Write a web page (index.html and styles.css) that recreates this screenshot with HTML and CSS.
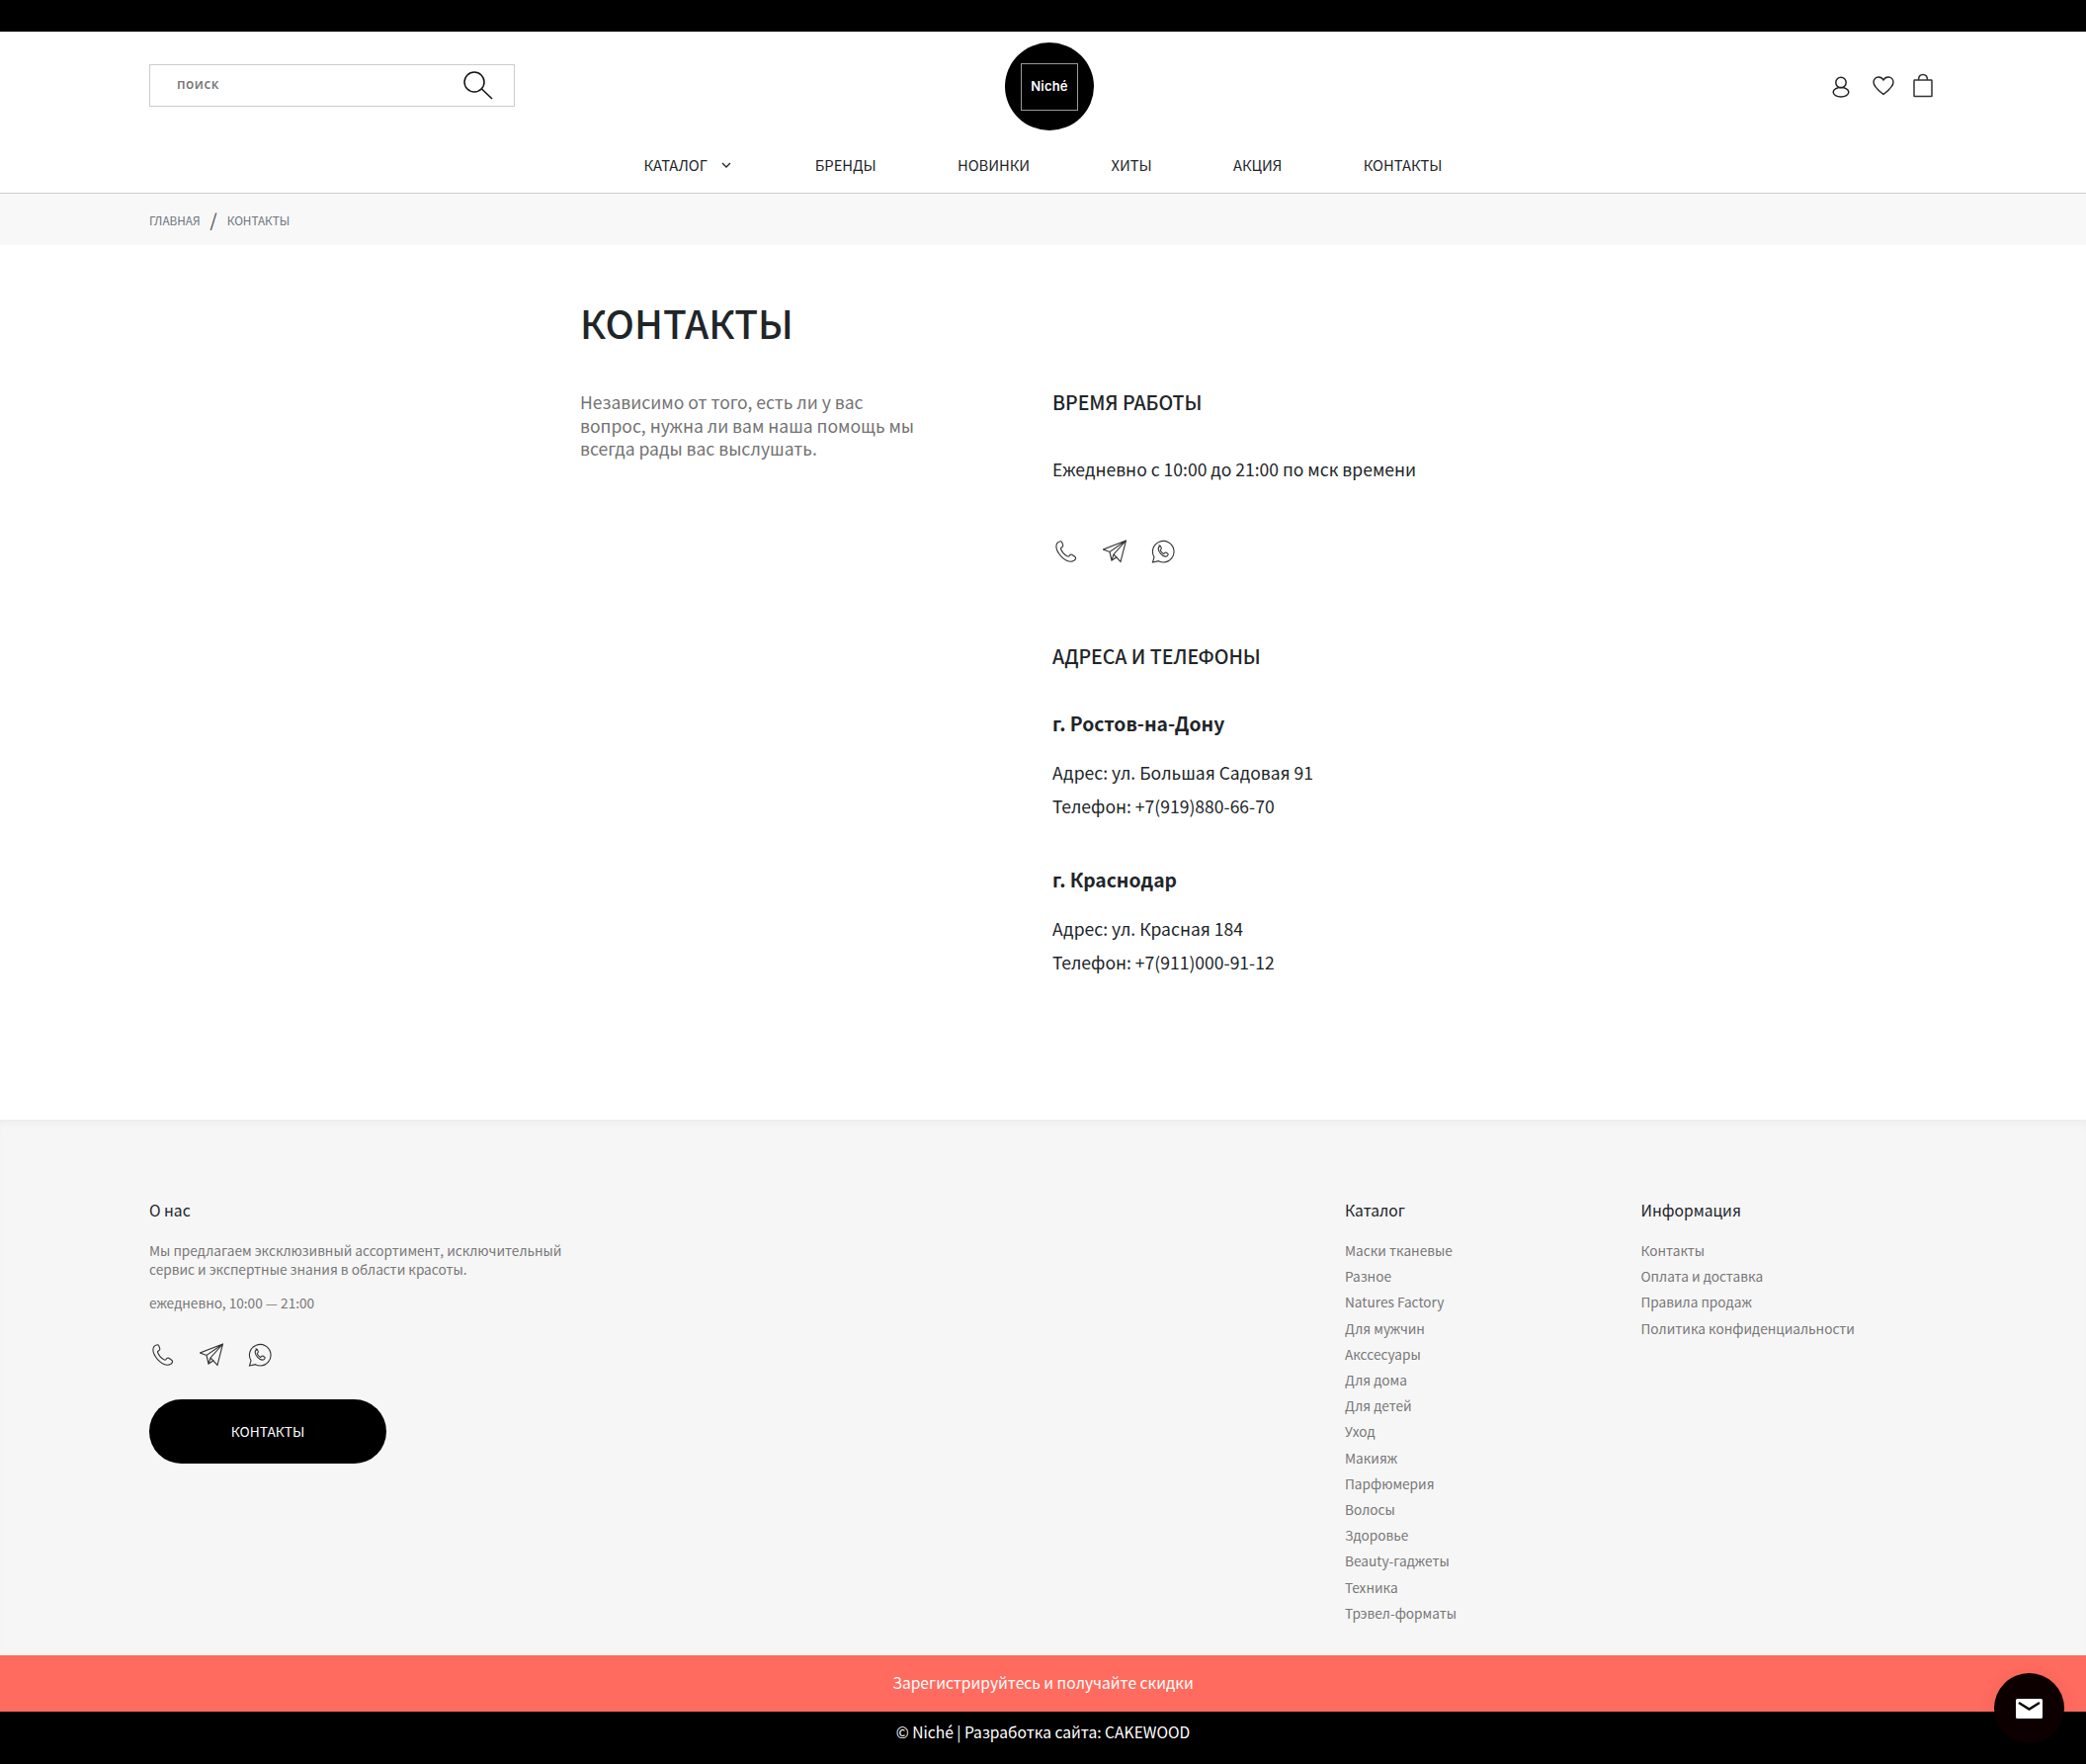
FILE: index.html
```html
<!DOCTYPE html>
<html lang="ru">
<head>
  <meta charset="UTF-8">
  <title>Контакты — Niché</title>
  <link rel="stylesheet" href="styles.css">
</head>
<body>
  <svg class="sprite" width="0" height="0">
    <symbol id="i-phone" viewBox="0 0 24 24">
      <path d="M6.2 1.800C4 2.300 2 4 1.900 6.600c-.1 3.200 1.900 7 4.600 10 2.800 3 6.300 5.400 9.600 5.600 2.300.1 4.600-.8 5.400-2.800.3-.8.1-1.400-.5-1.900l-3.200-2.200c-.7-.4-1.300-.3-1.800.2l-1.300 1.400c-.4.4-.8.4-1.300.2-1.500-.7-3-1.900-4.200-3.300-1.200-1.400-2.100-2.900-2.600-4.300-.2-.5-.1-.9.3-1.200l1.400-1.100c.6-.5.7-1.100.4-1.800L7.700 2.700c-.4-.7-.9-1-1.500-.9z"/>
    </symbol>
    <symbol id="i-plane" viewBox="0 0 24 24">
      <path d="M23.500 1 .5 10l6.500 2.500L23.500 1 11 15l7 7.500L23.500 1zM7 12.500l2 8.500 5.500-3.500M9 21l2-6"/>
    </symbol>
    <symbol id="i-whatsapp" viewBox="0 0 24 24">
      <path d="M1.500 23l1.500-5.200A10.800 10.800 0 1 1 12.500 23c-1.800 0-3.500-.4-5-1.300L1.500 23z"/>
      <path d="M9.200 6.800c-1.400.4-2.200 1.500-2 3 .3 2.700 3.900 6.900 7 7.300 1.400.2 2.600-.6 3-1.900.1-.5 0-.8-.4-1l-2-1.100c-.4-.2-.7-.1-1 .2l-.7.800c-.2.200-.5.300-.8.100-1.300-.7-2.400-1.900-3-3.200-.1-.3-.1-.5.100-.7l.7-.7c.3-.3.300-.6.200-1l-.9-2c-.3-.5-.6-.7-1.200-.6z"/>
    </symbol>
  </svg>

  <div class="topbar"></div>

  <header class="header">
    <div class="header-top">
      <form class="search">
        <span class="search-text">поиск</span>
        <svg class="search-icon" viewBox="0 0 30 30" fill="none" stroke="#111" stroke-width="1.500">
          <circle cx="11" cy="11" r="10"/>
          <path d="M18.500 18l10.500 10"/>
        </svg>
      </form>

      <a class="logo" href="#"><span class="logo-box">Niché</span></a>

      <div class="header-icons">
        <svg class="icon-user" viewBox="0 0 18 22" fill="none" stroke="#222" stroke-width="1.500">
          <circle cx="9" cy="6.500" r="5.200"/>
          <ellipse cx="9" cy="16.300" rx="7.800" ry="4.700"/>
        </svg>
        <svg class="icon-heart" viewBox="0 0 22 20" fill="none" stroke="#222" stroke-width="1.400">
          <path d="M11 18.500C6.500 14.800 1 10.800 1 6.200 1 3.200 3.200 1 6 1c2.100 0 3.900 1 5 3 1.100-2 2.900-3 5-3 2.800 0 5 2.200 5 5.200 0 4.600-5.500 8.600-10 12.300z"/>
        </svg>
        <svg class="icon-bag" viewBox="0 0 20 24" fill="none" stroke="#333" stroke-width="1.500">
          <rect x="1" y="6.500" width="18" height="16.500" rx=".5"/>
          <path d="M5.500 6.500C5.500 3 7.300 1 10 1s4.500 2 4.500 5.500"/>
        </svg>
      </div>
    </div>

    <nav class="nav">
      <a href="#" class="nav-catalog">КАТАЛОГ
        <svg class="chevron" viewBox="0 0 10 6" fill="none" stroke="#222" stroke-width="1.300"><path d="M1 1l4 4 4-4"/></svg>
      </a>
      <a href="#">БРЕНДЫ</a>
      <a href="#">НОВИНКИ</a>
      <a href="#">ХИТЫ</a>
      <a href="#">АКЦИЯ</a>
      <a href="#">КОНТАКТЫ</a>
    </nav>
  </header>

  <div class="breadcrumbs">
    <a href="#">ГЛАВНАЯ</a>
    <span class="slash">/</span>
    <a href="#">КОНТАКТЫ</a>
  </div>

  <main class="page">
    <h1 class="page-title">КОНТАКТЫ</h1>
    <div class="page-cols">
      <p class="intro">Независимо от того, есть ли у вас вопрос, нужна ли вам наша помощь мы всегда рады вас выслушать.</p>

      <div class="details">
        <h2 class="section-title">ВРЕМЯ РАБОТЫ</h2>
        <p class="hours">Ежедневно с 10:00 до 21:00 по мск времени</p>
        <div class="socials socials-main">
          <svg><use href="#i-phone"/></svg>
          <svg><use href="#i-plane"/></svg>
          <svg><use href="#i-whatsapp"/></svg>
        </div>

        <h2 class="section-title">АДРЕСА И ТЕЛЕФОНЫ</h2>

        <div class="city">
          <h3 class="city-name">г. Ростов-на-Дону</h3>
          <p>Адрес: ул. Большая Садовая 91</p>
          <p>Телефон: <a href="#">+7(919)880-66-70</a></p>
        </div>
        <div class="city">
          <h3 class="city-name">г. Краснодар</h3>
          <p>Адрес: ул. Красная 184</p>
          <p>Телефон: <a href="#">+7(911)000-91-12</a></p>
        </div>
      </div>
    </div>
  </main>

  <footer class="footer">
    <div class="footer-about">
      <h4 class="footer-title">О нас</h4>
      <p class="footer-text">Мы предлагаем эксклюзивный ассортимент, исключительный сервис и экспертные знания в области красоты.</p>
      <p class="footer-hours">ежедневно, 10:00 — 21:00</p>
      <div class="socials socials-footer">
        <svg><use href="#i-phone"/></svg>
        <svg><use href="#i-plane"/></svg>
        <svg><use href="#i-whatsapp"/></svg>
      </div>
      <a class="footer-btn" href="#">КОНТАКТЫ</a>
    </div>

    <div class="footer-catalog">
      <h4 class="footer-title">Каталог</h4>
      <ul class="footer-links">
        <li>Маски тканевые</li>
        <li>Разное</li>
        <li>Natures Factory</li>
        <li>Для мужчин</li>
        <li>Акссесуары</li>
        <li>Для дома</li>
        <li>Для детей</li>
        <li>Уход</li>
        <li>Макияж</li>
        <li>Парфюмерия</li>
        <li>Волосы</li>
        <li>Здоровье</li>
        <li>Beauty-гаджеты</li>
        <li>Техника</li>
        <li>Трэвел-форматы</li>
      </ul>
    </div>

    <div class="footer-info">
      <h4 class="footer-title">Информация</h4>
      <ul class="footer-links">
        <li>Контакты</li>
        <li>Оплата и доставка</li>
        <li>Правила продаж</li>
        <li>Политика конфиденциальности</li>
      </ul>
    </div>
  </footer>

  <div class="promo">Зарегистрируйтесь и получайте скидки</div>
  <div class="copyright">© Niché | Разработка сайта: CAKEWOOD</div>

  <a class="chat" href="#">
    <svg viewBox="0 0 27 20"><path fill="#fff" d="M1.500 0h24A1.500 1.500 0 0 1 27 1.500v17a1.500 1.500 0 0 1-1.500 1.500h-24A1.500 1.500 0 0 1 0 18.500v-17A1.500 1.500 0 0 1 1.500 0z"/><path fill="none" stroke="#0d0000" stroke-width="2.400" d="M3 4l10.500 6.500L24 4"/></svg>
  </a>
</body>
</html>
```

FILE: styles.css
```css
* {
  box-sizing: border-box;
}
body {
  margin: 0;
  position: relative;
  font-family: "Noto Sans CJK KR", "Noto Sans", sans-serif;
  background: #fff;
  color: #212529;
}
a {
  color: inherit;
  text-decoration: none;
}
h1, h2, h3, h4, p, ul {
  margin: 0;
  padding: 0;
}
ul {
  list-style: none;
}
.sprite {
  position: absolute;
}
.topbar {
  height: 32px;
  background: #000;
}

/* header */
.header {
  height: 164px;
  border-bottom: 1px solid #ccc;
}
.header-top {
  display: grid;
  grid-template-columns: 866px 90px 1fr;
  align-items: center;
  padding: 11px 151px 0;
}
.search {
  width: 370px;
  height: 43px;
  align-self: start;
  margin-top: 22px;
  border: 1px solid #ccc;
  display: flex;
  align-items: center;
  justify-content: space-between;
  padding: 0 21px 0 27px;
}
.search-text {
  font-family: "Open Sans", sans-serif;
  font-size: 13.500px;
  font-weight: 600;
  color: #777;
  letter-spacing: .5px;
  padding-bottom: 4px;
}
.search-icon {
  width: 30px;
  height: 30px;
}
.logo {
  width: 90px;
  height: 89px;
  border-radius: 50%;
  background: #000;
  display: flex;
  align-items: center;
  justify-content: center;
}
.logo-box {
  width: 58px;
  height: 48px;
  border: 1px solid #999;
  display: flex;
  align-items: center;
  justify-content: center;
  padding-bottom: 2px;
  color: #fff;
  font-family: "Inter", sans-serif;
  font-size: 13px;
  font-weight: 600;
  letter-spacing: .2px;
}
.header-icons {
  display: flex;
  justify-content: flex-end;
  align-items: center;
  gap: 21px;
  padding-right: 4px;
}
.icon-user {
  width: 18px;
  height: 22px;
}
.icon-heart {
  width: 22px;
  height: 20px;
  margin: 0 -2px 2px 2px;
}
.icon-bag {
  width: 20px;
  height: 25px;
  margin-bottom: 2px;
}
.nav {
  display: flex;
  justify-content: center;
  gap: 82.300px;
  margin-top: 23px;
  font-size: 14.750px;
  line-height: 24px;
  color: #212529;
}
.nav-catalog {
  display: flex;
  align-items: center;
  gap: 14px;
}
.chevron {
  width: 10px;
  height: 6px;
  margin-right: 2.500px;
}

/* breadcrumbs */
.breadcrumbs {
  height: 52px;
  background: #f8f8f8;
  padding: 0 151px;
  display: flex;
  align-items: center;
  gap: 10px;
  font-size: 11.750px;
  color: #6c757d;
}
.slash {
  font-size: 18px;
  color: #444;
}

/* main */
.page {
  height: 885px;
  padding: 53px 0 0 587px;
}
.page-title {
  font-size: 39px;
  line-height: 50px;
  font-weight: 500;
  color: #212529;
}
.page-cols {
  display: grid;
  grid-template-columns: 478px 1fr;
  margin-top: 44px;
}
.intro {
  width: 350px;
  font-size: 17.550px;
  line-height: 23.500px;
  color: #737373;
}
.section-title {
  font-size: 19.500px;
  line-height: 24px;
  font-weight: 500;
}
.hours {
  margin-top: 44px;
  font-size: 17.550px;
  line-height: 24px;
}
.socials {
  display: flex;
  padding-left: 2px;
}
.socials svg {
  width: 24px;
  height: 24px;
  fill: none;
  stroke: #333;
  stroke-width: 1.100;
}
.socials-main {
  gap: 25px;
  margin: 59px 0 82px;
}
.city {
  margin-top: 44px;
  font-size: 17.550px;
  line-height: 34px;
}
.city + .city {
  margin-top: 45px;
}
.city-name {
  font-size: 19.300px;
  line-height: 24px;
  font-weight: 600;
  margin-bottom: 21px;
}

/* footer */
.footer {
  height: 542px;
  background: #f6f6f6;
  padding: 81px 151px 0;
  display: grid;
  grid-template-columns: 1210px 299.500px 1fr;
  box-shadow: inset 0 6px 8px -4px rgba(0,0,0,.05);
}
.footer-title {
  font-size: 15.600px;
  line-height: 20px;
  font-weight: 400;
  color: #212529;
}
.footer-text {
  width: 430px;
  margin-top: 22px;
  font-size: 13.650px;
  line-height: 19px;
  color: #777;
}
.footer-hours {
  margin-top: 15px;
  font-size: 13.650px;
  line-height: 19px;
  color: #777;
}
.socials-footer {
  gap: 25px;
  margin-top: 31px;
}
.footer-btn {
  display: flex;
  align-items: center;
  justify-content: center;
  width: 240px;
  height: 65px;
  margin-top: 33px;
  padding-bottom: 2px;
  border-radius: 33px;
  background: #000;
  color: #fff;
  font-size: 13.750px;
}
.footer-links {
  margin-top: 18px;
  font-size: 13.650px;
  line-height: 26.200px;
  color: #777;
}

/* bottom bars */
.promo {
  height: 57px;
  padding-bottom: 3px;
  background: #ff6b5e;
  color: #fff;
  font-size: 15.600px;
  display: flex;
  align-items: center;
  justify-content: center;
}
.copyright {
  height: 54px;
  padding-bottom: 14px;
  background: #000;
  color: #fff;
  font-size: 15.600px;
  display: flex;
  align-items: center;
  justify-content: center;
}
.chat {
  position: absolute;
  right: 22px;
  bottom: 22px;
  width: 71px;
  height: 71px;
  border-radius: 50%;
  background: #0d0000;
  display: flex;
  align-items: center;
  justify-content: center;
  box-shadow: 0 2px 20px rgba(0,0,0,.06);
}
.chat svg {
  width: 27px;
  height: 20px;
}
```
